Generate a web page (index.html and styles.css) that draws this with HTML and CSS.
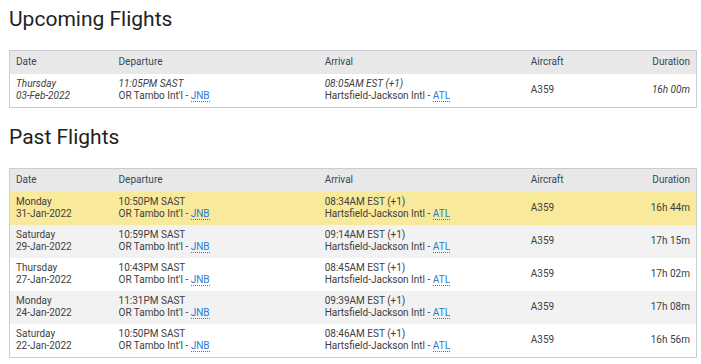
FILE: index.html
```html
<!DOCTYPE html>
<html>
<head>
<meta charset="utf-8">
<link rel="stylesheet" href="styles.css">
</head>
<body>
<div class="page">
  <h1 class="title title-first">Upcoming Flights</h1>
  <table class="flights">
    <colgroup><col class="c-date"><col class="c-dep"><col class="c-arr"><col class="c-ac"><col class="c-dur"></colgroup>
    <thead>
      <tr><th>Date</th><th>Departure</th><th>Arrival</th><th>Aircraft</th><th class="num">Duration</th></tr>
    </thead>
    <tbody class="italic-rows">
      <tr>
        <td><i>Thursday</i><br><i>03-Feb-2022</i></td>
        <td><i>11:05PM SAST</i><br>OR Tambo Int'l - <a class="code">JNB</a></td>
        <td><i>08:05AM EST (+1)</i><br>Hartsfield-Jackson Intl - <a class="code">ATL</a></td>
        <td>A359</td>
        <td class="num"><i>16h 00m</i></td>
      </tr>
    </tbody>
  </table>

  <h1 class="title title-second">Past Flights</h1>
  <table class="flights">
    <colgroup><col class="c-date"><col class="c-dep"><col class="c-arr"><col class="c-ac"><col class="c-dur"></colgroup>
    <thead>
      <tr><th>Date</th><th>Departure</th><th>Arrival</th><th>Aircraft</th><th class="num">Duration</th></tr>
    </thead>
    <tbody>
      <tr class="hl">
        <td>Monday<br>31-Jan-2022</td>
        <td>10:50PM SAST<br>OR Tambo Int'l - <a class="code">JNB</a></td>
        <td>08:34AM EST (+1)<br>Hartsfield-Jackson Intl - <a class="code">ATL</a></td>
        <td>A359</td>
        <td class="num">16h 44m</td>
      </tr>
      <tr class="alt">
        <td>Saturday<br>29-Jan-2022</td>
        <td>10:59PM SAST<br>OR Tambo Int'l - <a class="code">JNB</a></td>
        <td>09:14AM EST (+1)<br>Hartsfield-Jackson Intl - <a class="code">ATL</a></td>
        <td>A359</td>
        <td class="num">17h 15m</td>
      </tr>
      <tr>
        <td>Thursday<br>27-Jan-2022</td>
        <td>10:43PM SAST<br>OR Tambo Int'l - <a class="code">JNB</a></td>
        <td>08:45AM EST (+1)<br>Hartsfield-Jackson Intl - <a class="code">ATL</a></td>
        <td>A359</td>
        <td class="num">17h 02m</td>
      </tr>
      <tr class="alt">
        <td>Monday<br>24-Jan-2022</td>
        <td>11:31PM SAST<br>OR Tambo Int'l - <a class="code">JNB</a></td>
        <td>09:39AM EST (+1)<br>Hartsfield-Jackson Intl - <a class="code">ATL</a></td>
        <td>A359</td>
        <td class="num">17h 08m</td>
      </tr>
      <tr>
        <td>Saturday<br>22-Jan-2022</td>
        <td>10:50PM SAST<br>OR Tambo Int'l - <a class="code">JNB</a></td>
        <td>08:46AM EST (+1)<br>Hartsfield-Jackson Intl - <a class="code">ATL</a></td>
        <td>A359</td>
        <td class="num">16h 56m</td>
      </tr>
    </tbody>
  </table>
</div>
</body>
</html>
```

FILE: styles.css
```css
html, body {
  margin: 0;
  padding: 0;
  background: #ffffff;
}

body {
  font-family: Roboto, "Liberation Sans", sans-serif;
  color: #333333;
}

.page {
  padding: 7px 0 0 9px;
  width: 688px;
}

.title {
  font-size: 21px;
  line-height: 25px;
  font-weight: 400;
  color: #222222;
  margin: 0;
}

.title-first {
  margin-bottom: 18px;
}

.title-second {
  margin-top: 17px;
  margin-bottom: 18px;
}

.flights {
  width: 688px;
  table-layout: fixed;
  border-collapse: collapse;
  border: 1px solid #c9cdd1;
  font-size: 10px;
  line-height: 12px;
}

.c-date { width: 15%; }
.c-dep { width: 30%; }
.c-arr { width: 30%; }
.c-ac { width: 15%; }
.c-dur { width: 10%; }

.flights th {
  background: #e8e8e8;
  color: #34495e;
  font-weight: 400;
  text-align: left;
  padding: 5px 6px 6px 6px;
}

.flights td {
  padding: 4px 6px 5px 6px;
  vertical-align: middle;
  color: #404040;
}

.flights .num {
  text-align: right;
}

.flights tr.hl td {
  background: #f9e99b;
}

.flights tr.alt td {
  background: #f2f2f2;
}

.code {
  color: #2a7bd3;
  text-decoration: none;
  border-bottom: 1px dotted #2a7bd3;
}
```
